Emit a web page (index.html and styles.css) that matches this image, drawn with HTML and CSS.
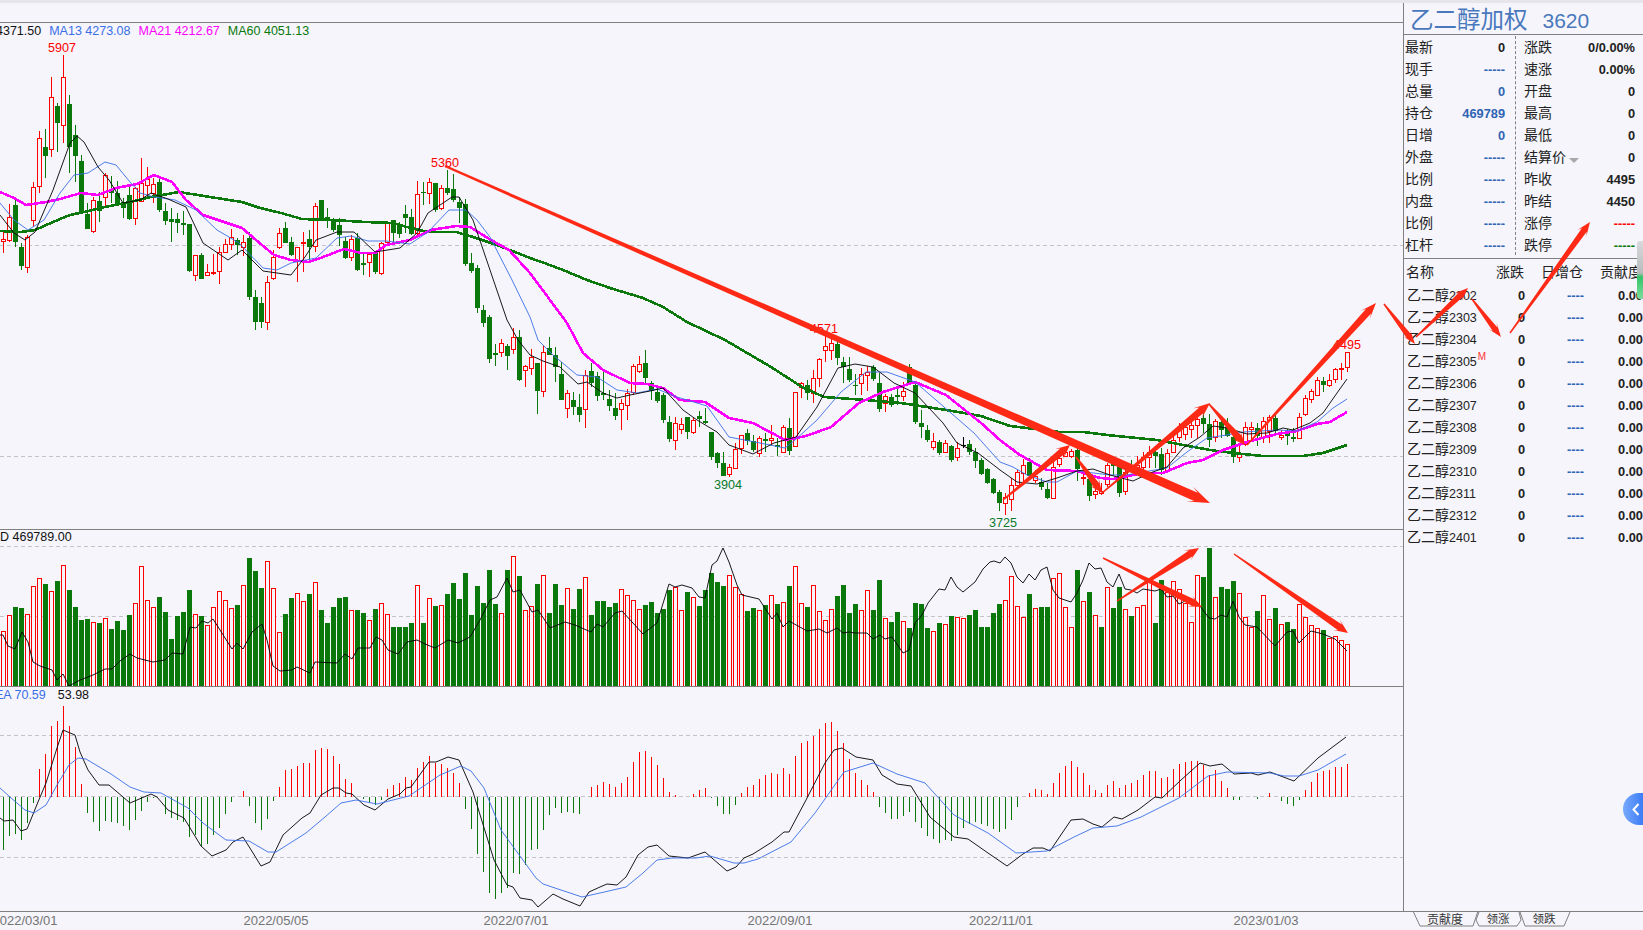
FILE: index.html
```html
<!DOCTYPE html>
<html lang="zh-CN">
<head>
    <meta charset="UTF-8">
    <title>乙二醇加权 3620</title>
    <link rel="stylesheet" href="styles.css">
</head>
<body>
    <div class="topstrip"></div>

    <div class="content">
        <div class="charts">
            <div class="toolbar"></div>
            <div class="pane pane-main">
                <div class="legend">
                    <span class="c-black">4371.50</span>
                    <span class="c-blue">MA13 4273.08</span>
                    <span class="c-pink">MA21 4212.67</span>
                    <span class="c-green">MA60 4051.13</span>
                </div>
                <svg id="mainChart" width="1403" height="506" viewBox="0 23 1403 506"></svg>
            </div>
            <div class="pane pane-vol">
                <div class="legend legend-vol">
                    <span class="c-black">D 469789.00</span>
                </div>
                <svg id="volChart" width="1403" height="156" viewBox="0 530 1403 156"></svg>
            </div>
            <div class="pane pane-macd">
                <div class="legend legend-macd">
                    <span class="c-blue">DEA 70.59</span>
                    <span class="c-black">53.98</span>
                </div>
                <svg id="macdChart" width="1403" height="224" viewBox="0 687 1403 224"></svg>
            </div>
        </div>

        <div class="side">
            <div class="title">乙二醇加权<span class="code">3620</span></div>

            <div class="quote">
                <div class="quote-col quote-left">
                    <div class="row"><span>最新</span><b>0</b></div>
                    <div class="row"><span>现手</span><b class="blue">-----</b></div>
                    <div class="row"><span>总量</span><b class="blue">0</b></div>
                    <div class="row"><span>持仓</span><b class="blue">469789</b></div>
                    <div class="row"><span>日增</span><b class="blue">0</b></div>
                    <div class="row"><span>外盘</span><b class="blue">-----</b></div>
                    <div class="row"><span>比例</span><b class="blue">-----</b></div>
                    <div class="row"><span>内盘</span><b class="blue">-----</b></div>
                    <div class="row"><span>比例</span><b class="blue">-----</b></div>
                    <div class="row"><span>杠杆</span><b class="blue">-----</b></div>
                </div>
                <div class="quote-col quote-right">
                    <div class="row"><span>涨跌</span><b>0/0.00%</b></div>
                    <div class="row"><span>速涨</span><b>0.00%</b></div>
                    <div class="row"><span>开盘</span><b>0</b></div>
                    <div class="row"><span>最高</span><b>0</b></div>
                    <div class="row"><span>最低</span><b>0</b></div>
                    <div class="row"><span>结算价<i class="caret"></i></span><b>0</b></div>
                    <div class="row"><span>昨收</span><b>4495</b></div>
                    <div class="row"><span>昨结</span><b>4450</b></div>
                    <div class="row"><span>涨停</span><b class="red">-----</b></div>
                    <div class="row"><span>跌停</span><b class="green">-----</b></div>
                </div>
            </div>

            <div class="contracts">
                <div class="line line-head"><span>名称</span><span>涨跌</span><span>日增仓</span><span>贡献度</span></div>
                <div class="line"><span>乙二醇<em>2302</em></span><b>0</b><b class="blue">----</b><b>0.00</b></div>
                <div class="line"><span>乙二醇<em>2303</em></span><b>0</b><b class="blue">----</b><b>0.00</b></div>
                <div class="line"><span>乙二醇<em>2304</em></span><b>0</b><b class="blue">----</b><b>0.00</b></div>
                <div class="line"><span>乙二醇<em>2305</em><sup class="main-mark">M</sup></span><b>0</b><b class="blue">----</b><b>0.00</b></div>
                <div class="line"><span>乙二醇<em>2306</em></span><b>0</b><b class="blue">----</b><b>0.00</b></div>
                <div class="line"><span>乙二醇<em>2307</em></span><b>0</b><b class="blue">----</b><b>0.00</b></div>
                <div class="line"><span>乙二醇<em>2308</em></span><b>0</b><b class="blue">----</b><b>0.00</b></div>
                <div class="line"><span>乙二醇<em>2309</em></span><b>0</b><b class="blue">----</b><b>0.00</b></div>
                <div class="line"><span>乙二醇<em>2310</em></span><b>0</b><b class="blue">----</b><b>0.00</b></div>
                <div class="line"><span>乙二醇<em>2311</em></span><b>0</b><b class="blue">----</b><b>0.00</b></div>
                <div class="line"><span>乙二醇<em>2312</em></span><b>0</b><b class="blue">----</b><b>0.00</b></div>
                <div class="line"><span>乙二醇<em>2401</em></span><b>0</b><b class="blue">----</b><b>0.00</b></div>
            </div>
        </div>
    </div>

    <div class="footer">
        <svg class="dates" width="1404" height="18" viewBox="0 912 1404 18">
            <text x="25" y="925">2022/03/01</text>
            <text x="276" y="925">2022/05/05</text>
            <text x="516" y="925">2022/07/01</text>
            <text x="780" y="925">2022/09/01</text>
            <text x="1001" y="925">2022/11/01</text>
            <text x="1266" y="925">2023/01/03</text>
        </svg>
        <svg class="tabs" width="239" height="18" viewBox="1404 912 239 18">
            <path d="M1413 911L1420 926H1473L1478 911"/>
            <path d="M1479 912L1476 920L1479 926H1517L1521 920L1519 912"/>
            <path d="M1520 912L1525 926H1564L1570 912"/>
            <text class="tab-active" x="1445" y="924">贡献度</text>
            <text x="1498" y="923">领涨</text>
            <text x="1544" y="923">领跌</text>
        </svg>
    </div>

    <div class="scroll-thumb"></div>
    <div class="collapse-btn">
        <svg width="8" height="13" viewBox="0 0 8 13"><path d="M6.5 1L1.5 6.5L6.5 12" fill="none" stroke="#fff" stroke-width="2"/></svg>
    </div>
    <svg id="arrows" class="arrows" width="1643" height="930" viewBox="0 0 1643 930"></svg>

    <script src="chart.js"></script>
</body>
</html>
```
FILE: styles.css
```css
* {
    box-sizing: border-box;
}
html, body {
    margin: 0;
    padding: 0;
}
body {
    width: 1643px;
    height: 930px;
    overflow: hidden;
    position: relative;
    background: #f5f5fb;
    color: #222;
    font-family: "Liberation Sans", "Noto Sans CJK SC", sans-serif;
}
svg {
    display: block;
}
.topstrip {
    height: 3px;
    background: #e5e5ea;
}
.content {
    display: flex;
    height: 908px;
}
.charts {
    width: 1403px;
    overflow: hidden;
}
.toolbar {
    height: 20px;
    border-bottom: 1px solid #808080;
}
.pane {
    position: relative;
    border-bottom: 1px solid #808080;
}
.pane-macd {
    border-bottom: none;
}
.legend {
    position: absolute;
    top: 0;
    left: -4px;
    display: flex;
    gap: 8px;
    font-size: 12.5px;
    line-height: 16px;
    white-space: nowrap;
}
.legend-vol {
    left: 0;
    top: -1px;
}
.legend-macd {
    left: -14px;
    top: 0;
    gap: 12px;
}
.c-black { color: #111; }
.c-blue { color: #3a6ee8; }
.c-pink { color: #ff00ff; }
.c-green { color: #0a780a; }

.price-up,
.price-down {
    font-size: 12.6px;
    text-anchor: middle;
}
.price-up { fill: #f00; }
.price-down { fill: #0a7a2a; }

.side {
    width: 240px;
    border-left: 1px solid #808080;
    overflow: hidden;
}
.title {
    height: 32px;
    padding: 2px 0 0 6px;
    border-bottom: 1px solid #808080;
    color: #4a78bd;
    font-size: 23.5px;
    line-height: 30px;
    white-space: nowrap;
}
.code {
    margin-left: 15px;
    font-size: 21px;
}
.quote {
    display: flex;
    height: 224px;
    padding: 1px 0 3px;
    border-bottom: 1px solid #808080;
}
.quote-col {
    display: flex;
    flex-direction: column;
}
.quote-left {
    width: 112px;
    padding: 0 10px 0 1px;
    border-right: 1px dashed #808080;
}
.quote-right {
    width: 127px;
    padding: 0 8px 0 8px;
}
.row {
    display: flex;
    justify-content: space-between;
    align-items: center;
    height: 22px;
    font-size: 14px;
    white-space: nowrap;
}
.row span,
.line span {
    margin-bottom: 2px;
}
.row b,
.line b {
    font-size: 12.8px;
}
.blue { color: #2f64b4; }
.red { color: #f00; }
.green { color: #0a780a; }
.caret {
    display: inline-block;
    margin-left: 3px;
    border-left: 5px solid transparent;
    border-right: 5px solid transparent;
    border-top: 5px solid #a8a8a8;
    vertical-align: -1px;
}
.contracts {
    font-size: 14px;
}
.line {
    display: grid;
    grid-template-columns: 88px 30px 59px 59px;
    align-items: center;
    height: 22px;
    padding-left: 3px;
    white-space: nowrap;
}
.line em {
    font-size: 12.5px;
    font-style: normal;
}
.line span:not(:first-child),
.line b {
    text-align: right;
}
.line-head {
    height: 25px;
    padding-left: 2px;
}
.main-mark {
    margin-left: 1px;
    color: #f33;
    font-size: 10px;
    line-height: 0;
}

.footer {
    display: flex;
    height: 19px;
    border-top: 1px solid #808080;
}
.dates text {
    fill: #747474;
    font-size: 13px;
    text-anchor: middle;
}
.tabs path {
    fill: none;
    stroke: #808080;
}
.tabs text {
    fill: #333;
    font-size: 11.5px;
    text-anchor: middle;
}
.tabs .tab-active {
    font-size: 12px;
}

.scroll-thumb {
    position: absolute;
    top: 241px;
    right: 0;
    width: 6px;
    height: 58px;
    border-radius: 3px 0 0 3px;
    background: linear-gradient(#d9d9de, #b7bcbb 55%, #34c46a 62%, #7ddc9c);
}
.collapse-btn {
    position: absolute;
    top: 793px;
    right: 0;
    display: flex;
    align-items: center;
    justify-content: flex-end;
    width: 20px;
    height: 32px;
    padding-right: 3px;
    border-radius: 16px 0 0 16px;
    background: linear-gradient(to right, #78a9fb, #3c7cf6);
}
.arrows {
    position: absolute;
    top: 0;
    left: 0;
    pointer-events: none;
}
```
FILE: chart.js
```js
const SVG_NS = 'http://www.w3.org/2000/svg';
const RED = '#f00';
const GREEN = '#0a780a';
const BG = '#f5f5fb';
const GRID = '#c4c4c8';

function el(parent, name, attrs) {
    const node = document.createElementNS(SVG_NS, name);
    for (const key in attrs) node.setAttribute(key, attrs[key]);
    parent.appendChild(node);
    return node;
}

function barX(i) {
    return 6 * i + 3;
}

function dashed(svg, y) {
    el(svg, 'line', { x1: 0, x2: 1403, y1: y, y2: y, stroke: GRID, 'stroke-dasharray': '4 3', 'shape-rendering': 'crispEdges' });
}

function curve(svg, pts, color, width) {
    el(svg, 'polyline', { points: pts.map(p => p.join(',')).join(' '), fill: 'none', stroke: color, 'stroke-width': width, 'stroke-linejoin': 'round', 'shape-rendering': width < 1 ? 'auto' : 'crispEdges' });
}

// candles: [type, high, top, bottom, low], in third-of-a-pixel steps above a base y
// type 0 = down (green), 1 = up (red), 2 = flat (black)
const candleSections = [
    { base: 0, rows: [
        [1,690,718,722,760],[1,612,652,720,725],[0,590,615,725,740],[0,730,740,798,810],[1,705,710,800,818],
        [1,545,560,660,680],[1,392,415,557,578],[0,388,441,467,533],[1,232,292,448,472],[0,310,318,368,456],
        [1,165,232,376,430],[0,285,312,440,520],[0,375,405,467,545],[0,465,484,638,640],[0,608,642,686,688],
        [1,590,600,692,700],[0,575,603,632,665],[1,520,525,592,618],[0,528,570,580,610],[0,543,580,612,612],
        [0,595,613,623,655],[0,560,585,657,660],[1,560,565,655,675],[1,475,550,602,605],[1,500,538,556,590],
        [1,535,552,580,608],[0,530,545,630,635],[0,610,633,662,675],[0,625,658,665,725],[0,640,658,668,700],
        [0,632,670,676,705],[0,672,672,812,815],[1,765,765,824,842],[0,760,765,836,838],[1,792,815,824,826],
        [1,762,815,818,825],[1,742,755,812,852],[1,716,733,755,758],[1,688,712,732,750],[0,715,720,735,765],
        [1,705,725,742,768],[0,695,715,892,900],[0,870,891,966,990],[0,890,909,966,985],[1,828,845,966,990],
        [1,750,770,835,840],[1,685,700,742,748],[0,665,685,728,730],[0,710,725,765,768],[1,742,742,782,845],
        [1,695,725,730,815],[0,690,717,740,785],[1,610,618,738,755],[0,600,600,654,655],[0,625,650,657,685],
        [0,655,657,690,695],[0,655,675,705,738],[0,710,723,775,778],[1,706,718,772,782],[0,700,715,810,812],
        [0,760,790,795,826],[1,755,762,785,830],[0,755,760,816,822],[1,725,730,818,826],[1,665,670,725,730],
        [0,660,660,700,725],[0,665,675,702,715],[0,615,643,653,700],[0,627,652,702,705],[1,543,583,698,705],
        [0,545,575,580,615],[1,533,545,580,612],[0,549,549,630,635],[1,555,565,625,630],[0,510,565,578,585],
        [0,522,567,600,605],[0,590,607,625,670]
    ] },
    { base: 220, rows: [
        [0,-62,-48,131,138],[0,100,128,152,158],[0,135,144,264,278],[0,255,270,308,320],[0,285,292,416,428],
        [0,372,400,404,437],[1,358,370,397,410],[0,372,378,407,450],[1,325,352,386,402],[0,330,352,480,484],
        [1,435,439,451,500],[1,388,412,445,465],[0,430,430,512,582],[1,378,397,512,530],[0,350,385,405,405],
        [0,380,406,440,486],[0,425,462,540,540],[1,510,520,563,594],[0,516,540,560,585],[0,522,561,585,605],
        [1,450,464,566,623],[0,428,453,490,500],[0,455,468,527,543],[0,455,520,524,540],[0,510,537,558,572],
        [0,520,564,588,600],[1,537,550,568,630],[1,507,520,556,600],[1,432,439,515,524],[1,408,433,452,458],
        [0,390,430,473,490],[0,483,490,513,540],[0,505,516,543,548],[0,518,525,599,610],[0,588,606,657,665],
        [1,590,610,659,690],[1,595,613,628,642],[0,590,592,636,656],[1,595,601,635,642],[0,572,588,596,620],
        [0,565,603,609,613]
    ] },
    { base: 150, rows: [
        [0,845,845,920,930],[0,905,910,940,955],[0,905,938,977,978],[1,942,952,971,982],[1,880,898,953,955],
        [1,855,856,893,912],[0,838,850,873,885],[0,855,872,900,905],[1,858,865,908,922],[0,850,867,872,905],
        [1,825,865,870,885],[0,865,885,891,917],[1,825,832,906,908],[0,805,834,902,915],[1,725,725,888,890],
        [1,695,700,712,745],[0,690,705,730,750],[1,660,685,730,760],[1,625,628,683,710],[1,558,587,600,635],
        [1,558,580,600,630],[0,570,583,625,645],[0,622,636,650,698],[0,622,657,690,695],[0,672,706,709,735],
        [1,655,672,700,735],[1,648,665,675,722],[0,645,650,688,692],[0,668,700,778,785],[1,732,738,758,785],
        [0,732,740,765,770],[0,715,735,742,765],[1,695,724,737,752],[0,643,652,700,702],[0,695,705,815,822],
        [0,780,818,830,865],[0,825,840,870,875],[1,850,872,890,900],[0,870,877,908,915],[1,870,880,907,910],
        [0,885,889,930,935],[1,875,893,922,932],[2,860,885,886,895],[0,870,882,905,915],[0,895,906,932,955],
        [0,925,930,972,975],[0,955,958,998,1002],[0,985,988,1028,1032],[0,1020,1027,1058,1082],[1,1030,1040,1060,1095],
        [1,985,1005,1048,1082],[1,960,965,1005,1007],[1,927,945,970,1000],[0,925,937,978,985],[1,960,978,990,1000],
        [0,985,997,1012,1020],[0,1000,1017,1045,1046],[1,935,950,1045,1046],[1,905,925,943,950],[1,890,905,918,920],
        [1,897,903,918,925],[0,890,900,958,992],[1,955,980,985,1005],[0,985,988,1037,1052],[1,1000,1023,1032,1048]
    ] },
    { base: 300, rows: [
        [1,550,572,578,585],[1,490,495,553,560],[0,480,490,497,525],[0,490,495,578,590],[1,510,516,572,585],
        [0,480,505,515,520],[1,468,495,500,520],[1,455,470,500,515],[1,438,455,470,505],[0,445,456,467,505],
        [0,445,462,510,525],[1,448,460,510,520],[1,405,420,455,460],[1,368,390,410,425],[1,365,380,402,420],
        [1,355,376,388,415],[1,345,358,376,415],[0,340,353,372,400],[0,342,372,420,440],[1,358,364,412,425],
        [0,360,365,390,415],[0,355,380,408,412],[0,400,410,472,488],[1,430,458,472,485],[1,365,382,432,438],
        [1,365,380,386,420],[0,370,385,408,438],[1,352,362,412,430],[1,345,350,392,430],[0,345,355,392,398],
        [1,390,405,412,420],[0,388,400,408,435],[0,385,411,416,425],[1,340,352,413,415],[1,285,295,342,348],
        [1,268,274,296,308],[1,232,241,285,288],[0,232,244,254,275],[1,222,241,254,260],[1,203,206,238,248],
        [1,188,203,208,240],[1,157,157,200,216]
    ] }
];

const ma5 = [[0,215],[14,233],[25,240],[35,232],[53,190],[70,143],[77,136],[84,142],[98,167],[109,180],[123,203],[140,200],[151,193],[168,199],[186,207],[203,243],[228,260],[242,250],[263,271],[291,275],[305,257],[316,240],[337,232],[354,232],[375,252],[400,248],[417,233],[428,213],[452,197],[459,197],[473,220],[490,270],[507,320],[518,340],[530,355],[543,361],[560,367],[578,384],[587,382],[603,393],[617,398],[630,395],[650,391],[663,388],[683,410],[697,420],[717,432],[729,445],[753,454],[774,443],[796,437],[817,407],[838,368],[855,364],[873,367],[894,383],[915,393],[943,423],[957,443],[978,453],[1000,470],[1017,482],[1037,484],[1057,478],[1077,471],[1093,469],[1110,475],[1133,481],[1150,473],[1167,467],[1183,448],[1200,437],[1213,426],[1227,428],[1247,434],[1267,433],[1283,428],[1293,430],[1310,423],[1323,413],[1337,393],[1347,379]];

const ma13 = [[0,203],[14,220],[28,230],[44,220],[60,193],[74,175],[88,173],[105,162],[116,165],[130,182],[140,193],[154,197],[175,200],[196,210],[217,230],[239,243],[263,268],[277,270],[291,263],[316,258],[337,238],[351,236],[368,241],[386,241],[410,244],[428,232],[449,210],[466,210],[477,220],[490,237],[512,280],[530,317],[538,340],[553,355],[577,375],[597,377],[617,390],[637,393],[657,389],[677,397],[707,406],[729,437],[760,443],[785,448],[795,440],[817,420],[841,392],[866,372],[887,372],[915,382],[936,400],[974,433],[1000,462],[1013,467],[1027,475],[1047,482],[1057,482],[1077,471],[1110,475],[1127,475],[1143,472],[1167,468],[1187,452],[1207,438],[1227,435],[1243,432],[1277,430],[1297,431],[1317,422],[1333,408],[1347,399]];

const ma21 = [[0,192],[14,198],[26,205],[46,202],[60,199],[81,193],[98,195],[116,188],[137,184],[154,175],[172,182],[186,200],[203,215],[224,222],[242,228],[256,240],[274,255],[291,260],[309,262],[323,257],[344,249],[361,253],[375,253],[386,245],[410,240],[431,230],[456,226],[470,227],[491,240],[509,250],[530,273],[550,300],[567,323],[583,353],[603,370],[630,383],[647,384],[663,388],[680,400],[705,402],[729,418],[753,423],[785,440],[806,436],[831,427],[859,403],[883,392],[915,382],[946,395],[981,423],[1000,440],[1020,455],[1047,470],[1077,471],[1100,478],[1113,479],[1143,473],[1163,473],[1187,463],[1203,460],[1223,450],[1247,442],[1277,434],[1297,431],[1317,424],[1330,422],[1347,412]];

const ma60 = [[0,231],[21,232],[35,230],[53,222],[70,215],[84,212],[105,207],[130,202],[151,197],[179,192],[210,197],[242,202],[260,208],[281,213],[302,219],[333,220],[365,222],[393,223],[407,227],[428,232],[456,232],[470,236],[497,245],[530,258],[547,264],[563,270],[587,280],[610,288],[643,298],[663,307],[687,322],[725,340],[771,367],[802,387],[824,397],[866,400],[901,403],[946,410],[981,416],[1010,426],[1060,432],[1083,432],[1107,435],[1157,440],[1183,445],[1210,450],[1233,453],[1263,456],[1303,456],[1323,453],[1347,445]];

// volume: top of each bar in third-of-a-pixel steps, red bars negative
const volSections = [
    { base: 520, rows: [
        -334,-286,261,264,-283,-199,-175,192,-214,183,-136,210,261,300,297,-307,309,-295,327,303,
        330,285,-250,-139,-241,-262,231,276,357,288,276,210,-283,288,-315,-262,-214,-241,-265,255,
        -196,114,153,204,-124,-205,-337,282,234,-220,-244,222,-187,270,309,261,234,231,-271,270,
        279,-301,267,-250,-283,321,321,321,309,-196,309,-235,258,-256,222,189,237,159,285,198,
        249,150,252
    ] },
    { base: 530, rows: [
        -250,120,-79,138,-241,-229,162,-136,249,162,225,-175,237,177,-142,255,213,213,231,219,
        -178,-196,-211,-238,225,216,249,237,180,-170,-241,186,-202,228,180,129,156,168,-136,-172,
        -193,243,234,-241,225,-196,222,-217,168,-109,-220,231,-166,-244,-271,-238,198,165,249,222,
        -241,-181,240,150,-265,276,246,-274,294,219,222,294,-304,279,-283,258,-262,-265,255,240,
        291,291,249,222,
        -211,-139,-229,-262,192,-235,231,231,-145,-130,-232,-292,120,-214,186,-256,291,-172,234,171,
        -238,258,-232,-226,-150,279,150,-185,-154,-178,-218,-277,-136,141,54,-202,171,177,153,-190,
        -262,-290,243,-196,-268,234,-283,276,297,-223,-262,-286,-295,300,-325,-319,-331,-343
    ] }
];

const volLine = [[0,635],[3,635],[8,646],[15,649],[22,632],[28,642],[33,662],[40,666],[52,670],[57,680],[63,674],[69,686],[80,680],[93,675],[105,669],[112,669],[120,661],[130,654],[137,658],[153,662],[165,660],[172,653],[183,654],[190,627],[196,628],[202,621],[208,623],[213,619],[220,630],[232,649],[237,643],[243,649],[252,632],[262,624],[267,640],[273,666],[280,671],[292,670],[297,667],[310,673],[315,662],[337,663],[345,654],[352,659],[358,648],[370,648],[376,637],[382,640],[388,650],[398,654],[407,642],[417,640],[425,644],[435,648],[448,640],[458,643],[470,637],[480,620],[490,600],[497,597],[507,578],[513,592],[520,590],[532,612],[538,610],[550,628],[565,622],[575,625],[591,632],[597,624],[603,627],[615,613],[622,611],[643,634],[657,623],[669,584],[675,587],[682,585],[692,588],[699,597],[705,598],[712,565],[717,561],[723,548],[729,562],[737,585],[742,595],[759,599],[772,619],[777,613],[783,627],[789,621],[807,631],[819,629],[827,633],[837,628],[843,633],[849,632],[855,633],[867,633],[873,639],[880,635],[885,639],[892,637],[903,653],[909,650],[915,623],[922,615],[928,603],[939,589],[945,590],[951,577],[957,587],[963,592],[975,582],[983,569],[990,562],[994,561],[1000,563],[1005,557],[1011,563],[1017,577],[1023,583],[1029,574],[1035,580],[1041,570],[1047,567],[1053,590],[1059,598],[1071,602],[1077,593],[1083,580],[1089,563],[1095,569],[1101,568],[1107,582],[1113,587],[1119,574],[1125,589],[1131,590],[1137,593],[1143,589],[1155,591],[1161,589],[1167,597],[1173,596],[1179,604],[1185,601],[1197,602],[1209,618],[1215,619],[1221,615],[1227,617],[1233,601],[1239,617],[1245,625],[1257,627],[1275,646],[1287,632],[1293,631],[1299,643],[1311,631],[1323,634],[1335,639],[1347,651]];

// macd histogram ends, third-of-a-pixel steps, zero sits at 349 / 289
const histSections = [
    { base: 680, rows: [
        510,468,462,480,430,370,267,222,138,123,78,138,202,313,400,425,452,422,425,430,
        437,450,420,392,365,355,350,402,413,420,425,470,465,498,492,465,443,402,367,350,
        333,378,428,450,417,362,322,270,267,258,250,249,210,204,208,228,252,297,310,349,
        358,365,375,360,327,315,308,292,300,265,245,228,250,252,265,280,308,387,447,522,
        575,638,657,638,625,578,582,555,510,507,450,405,383,398,395,398,402,348,322,315
    ] },
    { base: 700, rows: [
        246,252,261,249,231,186,156,153,171,195,234,276,285,288,289,282,270,264,293,317,
        342,342,315,279,261,255,237,225,219,222,204,222,168,129,123,108,87,69,66,93,
        129,177,219,240,255,276,321,339,357,357,348,336,366,384,408,417,429,420,423,405,
        384,372,366,372,378,387,396,387,360,321,288,279,267,270,282,249,219,198,183,201,
        219,255,270,279,255,243,264,255,249,240,225,213,213,234,231,207,192,186,183,183,
        195,225,210,243,264,300,300,291,290,297,289,279,289,302,312,318,300,270,246,219,
        213,210,201,201,192
    ] }
];

const macdBlack = [[0,818],[4,821],[13,820],[21,831],[27,829],[38,802],[46,783],[57,748],[63,730],[75,735],[80,752],[88,770],[99,785],[109,785],[130,803],[151,794],[157,797],[168,810],[184,818],[201,846],[212,856],[226,850],[233,842],[243,837],[253,853],[261,866],[270,862],[283,835],[302,818],[310,813],[321,795],[333,788],[339,788],[346,793],[352,794],[364,805],[375,810],[388,799],[400,794],[406,788],[411,787],[429,762],[436,762],[448,757],[459,760],[473,792],[494,860],[507,885],[513,887],[520,898],[532,900],[538,907],[553,894],[563,899],[580,906],[589,892],[600,887],[607,884],[617,885],[626,877],[638,855],[648,847],[657,845],[669,856],[688,858],[705,852],[727,871],[736,867],[744,858],[753,854],[772,842],[784,832],[789,832],[806,800],[825,763],[834,750],[842,748],[856,757],[873,760],[882,775],[897,784],[911,786],[930,817],[954,837],[968,839],[988,853],[1007,866],[1023,854],[1033,848],[1043,848],[1050,851],[1071,820],[1083,819],[1093,824],[1102,827],[1114,817],[1122,819],[1138,810],[1155,797],[1162,798],[1181,780],[1200,763],[1210,766],[1222,764],[1234,774],[1251,773],[1258,775],[1270,772],[1294,781],[1318,758],[1346,737]];

const macdBlue = [[0,788],[10,797],[25,810],[34,813],[46,805],[57,785],[69,765],[78,758],[86,759],[111,774],[130,787],[144,792],[161,793],[188,808],[203,823],[226,840],[249,841],[268,852],[276,852],[306,833],[325,817],[341,803],[356,800],[377,804],[409,796],[440,775],[461,766],[471,771],[484,788],[501,830],[536,878],[543,884],[582,897],[600,893],[626,887],[643,873],[657,860],[672,858],[696,858],[710,856],[734,863],[744,863],[758,859],[791,842],[815,813],[844,772],[873,763],[897,774],[925,783],[954,815],[988,833],[1016,853],[1047,851],[1074,837],[1093,828],[1117,826],[1141,817],[1179,798],[1208,776],[1227,772],[1270,773],[1284,776],[1299,776],[1318,770],[1346,754]];

// hand-drawn annotations: tail x, tail y, tip x, tip y, tail width, shaft width, head width, head length
const arrows = [
    [445,166,1210,503,2.5,9,16,22],
    [1003,500,1070,445,1.5,7,13,14],
    [1076,457,1102,493,1.5,7,12,14],
    [1102,493,1210,403,1.5,7,13,16],
    [1209,404,1245,445,1.5,7,12,14],
    [1247,445,1376,303,1.5,7,12,16],
    [1384,304,1415,344,1.5,6,10,14],
    [1416,337,1468,288,1.5,6,11,14],
    [1472,299,1501,337,1.5,6,10,14],
    [1510,333,1590,222,1.5,6,11,14],
    [1103,558,1202,607,1.5,7,12,14],
    [1117,601,1199,548,1.5,7,12,14],
    [1234,554,1348,633,1.5,7,12,14]
];

function drawCandles(svg) {
    let i = 0;
    candleSections.forEach(section => {
        const y = v => section.base + v / 3;
        section.rows.forEach(row => {
            const x = barX(i++);
            const color = row[0] === 1 ? RED : row[0] === 0 ? GREEN : '#000';
            const top = Math.round(y(row[2]));
            const bot = Math.max(Math.round(y(row[3])), top + 1);
            el(svg, 'line', { x1: x + 0.5, x2: x + 0.5, y1: y(row[1]), y2: y(row[4]), stroke: color, 'shape-rendering': 'crispEdges' });
            if (row[0] === 0) {
                el(svg, 'rect', { x: x - 2, y: top, width: 5, height: bot - top, fill: color, 'shape-rendering': 'crispEdges' });
            } else if (row[0] === 1) {
                el(svg, 'rect', { x: x - 1.5, y: top + 0.5, width: 4, height: bot - top, fill: BG, stroke: color, 'shape-rendering': 'crispEdges' });
            } else {
                el(svg, 'line', { x1: x - 2, x2: x + 3, y1: top + 0.5, y2: top + 0.5, stroke: color, 'shape-rendering': 'crispEdges' });
            }
        });
    });
}

function drawMain() {
    const svg = document.getElementById('mainChart');
    dashed(svg, 245.5);
    dashed(svg, 456.5);
    drawCandles(svg);
    curve(svg, ma60, GREEN, 2.6);
    curve(svg, ma21, '#ff00ff', 2.6);
    curve(svg, ma13, '#3a6ee8', 0.9);
    curve(svg, ma5, '#000', 0.9);
    [['5907', 62, 52, 'up'], ['5360', 445, 167, 'up'], ['4571', 824, 333, 'up'], ['3904', 728, 489, 'down'], ['3725', 1003, 527, 'down'], ['4495', 1347, 349, 'up']].forEach(item => {
        const text = el(svg, 'text', { x: item[1], y: item[2], class: 'price-' + item[3] });
        text.textContent = item[0];
    });
}

function drawVolume() {
    const svg = document.getElementById('volChart');
    dashed(svg, 546.5);
    dashed(svg, 616.5);
    let i = 0;
    volSections.forEach(section => {
        section.rows.forEach(v => {
            const x = barX(i++);
            const top = Math.round(section.base + Math.abs(v) / 3);
            if (v < 0) {
                el(svg, 'rect', { x: x - 1.5, y: top + 0.5, width: 4, height: 686 - top, fill: BG, stroke: RED, 'shape-rendering': 'crispEdges' });
            } else {
                el(svg, 'rect', { x: x - 2, y: top, width: 5, height: 686 - top, fill: GREEN, 'shape-rendering': 'crispEdges' });
            }
        });
    });
    curve(svg, volLine, '#000', 0.9);
}

function drawMacd() {
    const svg = document.getElementById('macdChart');
    dashed(svg, 735.5);
    dashed(svg, 796.5);
    dashed(svg, 857.5);
    let i = 0;
    histSections.forEach(section => {
        section.rows.forEach(v => {
            const x = barX(i++) + 0.5;
            const y = section.base + v / 3;
            if (Math.abs(y - 796.5) < 1) return;
            el(svg, 'line', { x1: x, x2: x, y1: 796.5, y2: y, stroke: y < 796.5 ? RED : GREEN, 'shape-rendering': 'crispEdges' });
        });
    });
    curve(svg, macdBlack, '#000', 0.9);
    curve(svg, macdBlue, '#3a6ee8', 0.9);
}

function drawArrows() {
    const svg = document.getElementById('arrows');
    arrows.forEach(a => {
        const [x1, y1, x2, y2, tail, shaft, head, len] = a;
        const d = Math.hypot(x2 - x1, y2 - y1);
        const ux = (x2 - x1) / d, uy = (y2 - y1) / d;
        const nx = -uy, ny = ux;
        const at = (back, side) => (x2 - ux * back + nx * side).toFixed(1) + ',' + (y2 - uy * back + ny * side).toFixed(1);
        const pts = [
            at(d, tail / 2), at(len * 0.7, shaft / 2), at(len, head / 2), at(0, 0),
            at(len, -head / 2), at(len * 0.7, -shaft / 2), at(d, -tail / 2)
        ];
        el(svg, 'polygon', { points: pts.join(' '), fill: '#ff2a16' });
    });
}

drawMain();
drawVolume();
drawMacd();
drawArrows();
```
